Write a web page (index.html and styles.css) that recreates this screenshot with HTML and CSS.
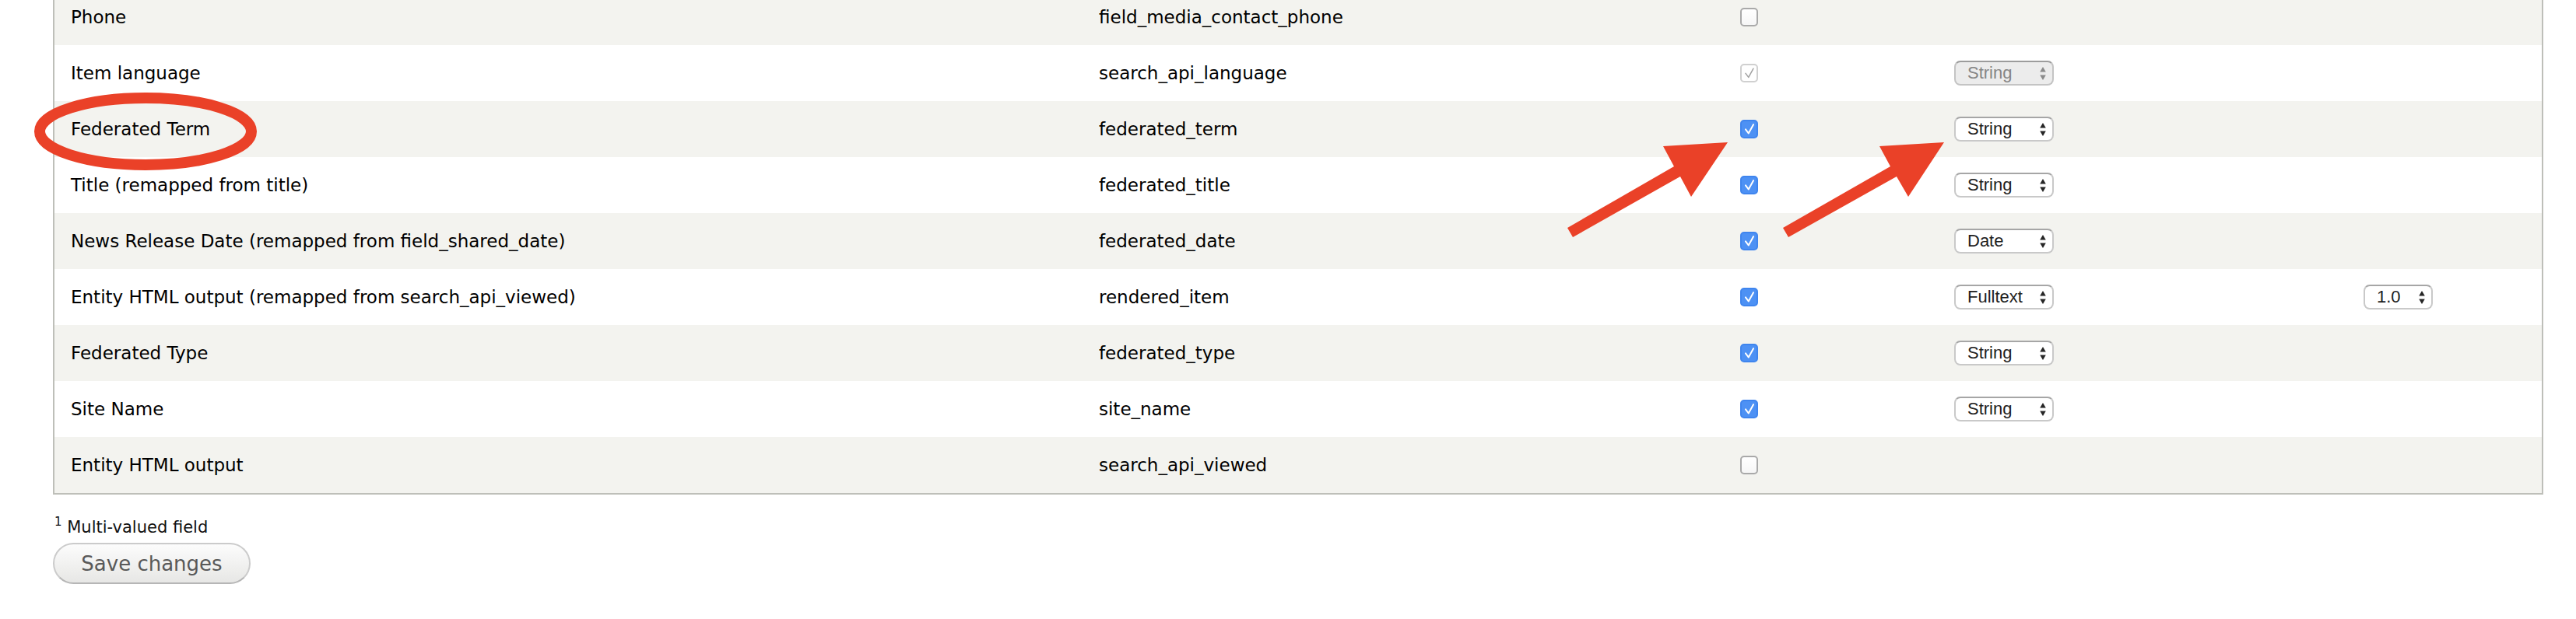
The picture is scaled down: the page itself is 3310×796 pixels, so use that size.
FILE: index.html
```html
<!DOCTYPE html>
<html lang="en">
<head>
<meta charset="utf-8">
<title>Fields</title>
<link rel="stylesheet" href="styles.css">
</head>
<body>
<div class="page">
  <table class="fields">
    <colgroup>
      <col class="c-label"><col class="c-machine"><col class="c-index"><col class="c-type"><col class="c-boost">
    </colgroup>
    <tbody>
      <tr class="odd">
        <td>Phone</td><td>field_media_contact_phone</td>
        <td><span class="cb"></span></td><td></td><td></td>
      </tr>
      <tr class="even">
        <td>Item language</td><td>search_api_language</td>
        <td><span class="cb cb-disabled"><svg viewBox="0 0 24 24"><path d="M6 12.5 L10.5 18.5 L18 5"/></svg></span></td>
        <td><span class="sel sel-disabled"><span>String</span><svg class="arr" viewBox="0 0 10 20"><path d="M5 1 L9 8 H1 Z M5 19 L9 12 H1 Z"/></svg></span></td><td></td>
      </tr>
      <tr class="odd">
        <td>Federated Term</td><td>federated_term</td>
        <td><span class="cb cb-on"><svg viewBox="0 0 24 24"><path d="M6 12.5 L10.5 18.5 L18 5"/></svg></span></td>
        <td><span class="sel"><span>String</span><svg class="arr" viewBox="0 0 10 20"><path d="M5 1 L9 8 H1 Z M5 19 L9 12 H1 Z"/></svg></span></td><td></td>
      </tr>
      <tr class="even">
        <td>Title (remapped from title)</td><td>federated_title</td>
        <td><span class="cb cb-on"><svg viewBox="0 0 24 24"><path d="M6 12.5 L10.5 18.5 L18 5"/></svg></span></td>
        <td><span class="sel"><span>String</span><svg class="arr" viewBox="0 0 10 20"><path d="M5 1 L9 8 H1 Z M5 19 L9 12 H1 Z"/></svg></span></td><td></td>
      </tr>
      <tr class="odd">
        <td>News Release Date (remapped from field_shared_date)</td><td>federated_date</td>
        <td><span class="cb cb-on"><svg viewBox="0 0 24 24"><path d="M6 12.5 L10.5 18.5 L18 5"/></svg></span></td>
        <td><span class="sel"><span>Date</span><svg class="arr" viewBox="0 0 10 20"><path d="M5 1 L9 8 H1 Z M5 19 L9 12 H1 Z"/></svg></span></td><td></td>
      </tr>
      <tr class="even">
        <td>Entity HTML output (remapped from search_api_viewed)</td><td>rendered_item</td>
        <td><span class="cb cb-on"><svg viewBox="0 0 24 24"><path d="M6 12.5 L10.5 18.5 L18 5"/></svg></span></td>
        <td><span class="sel"><span>Fulltext</span><svg class="arr" viewBox="0 0 10 20"><path d="M5 1 L9 8 H1 Z M5 19 L9 12 H1 Z"/></svg></span></td>
        <td><span class="sel sel-small"><span>1.0</span><svg class="arr" viewBox="0 0 10 20"><path d="M5 1 L9 8 H1 Z M5 19 L9 12 H1 Z"/></svg></span></td>
      </tr>
      <tr class="odd">
        <td>Federated Type</td><td>federated_type</td>
        <td><span class="cb cb-on"><svg viewBox="0 0 24 24"><path d="M6 12.5 L10.5 18.5 L18 5"/></svg></span></td>
        <td><span class="sel"><span>String</span><svg class="arr" viewBox="0 0 10 20"><path d="M5 1 L9 8 H1 Z M5 19 L9 12 H1 Z"/></svg></span></td><td></td>
      </tr>
      <tr class="even">
        <td>Site Name</td><td>site_name</td>
        <td><span class="cb cb-on"><svg viewBox="0 0 24 24"><path d="M6 12.5 L10.5 18.5 L18 5"/></svg></span></td>
        <td><span class="sel"><span>String</span><svg class="arr" viewBox="0 0 10 20"><path d="M5 1 L9 8 H1 Z M5 19 L9 12 H1 Z"/></svg></span></td><td></td>
      </tr>
      <tr class="odd">
        <td>Entity HTML output</td><td>search_api_viewed</td>
        <td><span class="cb"></span></td><td></td><td></td>
      </tr>
    </tbody>
  </table>
  <p class="note"><sup>1</sup> Multi-valued field</p>
  <button class="btn" type="button">Save changes</button>
</div>
<svg class="annot" width="3310" height="796" viewBox="0 0 3310 796">
  <ellipse cx="187" cy="169" rx="136" ry="43" fill="none" stroke="#ea4128" stroke-width="14"/>
  <polygon fill="#ea4128" points="2014,293 2151,214 2137,188 2220,183 2173,253 2159,227 2021,305"/>
  <polygon fill="#ea4128" points="2291,293 2429,214 2415,188 2498,183 2452,253 2437,227 2298,305"/>
</svg>
</body>
</html>
```

FILE: styles.css
```css
html, body {
  margin: 0;
  padding: 0;
  background: #ffffff;
}

body {
  width: 3310px;
  height: 796px;
  overflow: hidden;
  position: relative;
  font-family: "DejaVu Sans", Verdana, sans-serif;
  color: #000;
}

.page {
  padding: 0 42px 0 68px;
}

.fields {
  margin-top: -16px;
  width: 100%;
  table-layout: fixed;
  border-collapse: separate;
  border-spacing: 0;
  border: 2px solid #bebfb9;
  font-size: 23px;
}

.c-label { width: 1321px; }
.c-machine { width: 824px; }
.c-index { width: 275px; }
.c-type { width: 526px; }
.c-boost { width: 250px; }

.fields td {
  height: 72px;
  padding: 0 21px;
  vertical-align: middle;
  white-space: nowrap;
}

.fields tr.odd { background: #f3f3ef; }
.fields tr.even { background: #ffffff; }

.cb {
  display: block;
  width: 23px;
  height: 24px;
  box-sizing: border-box;
  border: 2px solid #a9a9a9;
  border-radius: 5px;
  background: linear-gradient(#ffffff, #f6f6f6);
}

.cb svg {
  display: block;
  width: 20px;
  height: 20px;
  fill: none;
  stroke-width: 2.4;
  stroke-linecap: round;
  stroke-linejoin: round;
}

.cb-on {
  border-color: #3f85ee;
  background: #4d91f4;
}

.cb-on svg { stroke: #ffffff; }

.cb-disabled {
  border-color: #d0d0d0;
  background: #ffffff;
}

.cb-disabled svg { stroke: #a0a0a0; stroke-width: 1.8; }

.sel {
  display: flex;
  align-items: center;
  justify-content: space-between;
  width: 128px;
  height: 32px;
  box-sizing: border-box;
  padding: 0 7px 0 15px;
  border: 2px solid #c9c9c9;
  border-top-color: #a6a6a6;
  border-radius: 8px;
  background: #ffffff;
  font-family: "Liberation Sans", Arial, sans-serif;
  font-size: 22px;
  color: #1e1e1e;
}

.sel .arr {
  width: 10px;
  height: 19px;
  fill: #262626;
}

.sel-small { width: 89px; }

.sel-disabled {
  background: #ececec;
  color: #858585;
  border-color: #c4c4c4;
  border-top-color: #9c9c9c;
}

.sel-disabled .arr { fill: #8a8a8a; }

.note {
  margin: 27px 0 0 0;
  font-size: 21px;
  line-height: 30px;
  color: #111;
}

.note sup {
  font-size: 15px;
  line-height: 0;
  vertical-align: 9px;
  margin-left: 2px;
}

.btn {
  display: block;
  margin-top: 5px;
  width: 254px;
  height: 53px;
  box-sizing: border-box;
  padding: 0;
  border: 2px solid #cbcbcb;
  border-bottom-color: #b6b6b6;
  border-radius: 27px;
  background: linear-gradient(#fcfcfc, #e7e7e5);
  font-family: "DejaVu Sans", Verdana, sans-serif;
  font-size: 26px;
  color: #595959;
}

.annot {
  position: absolute;
  top: 0;
  left: 0;
  pointer-events: none;
}
```
